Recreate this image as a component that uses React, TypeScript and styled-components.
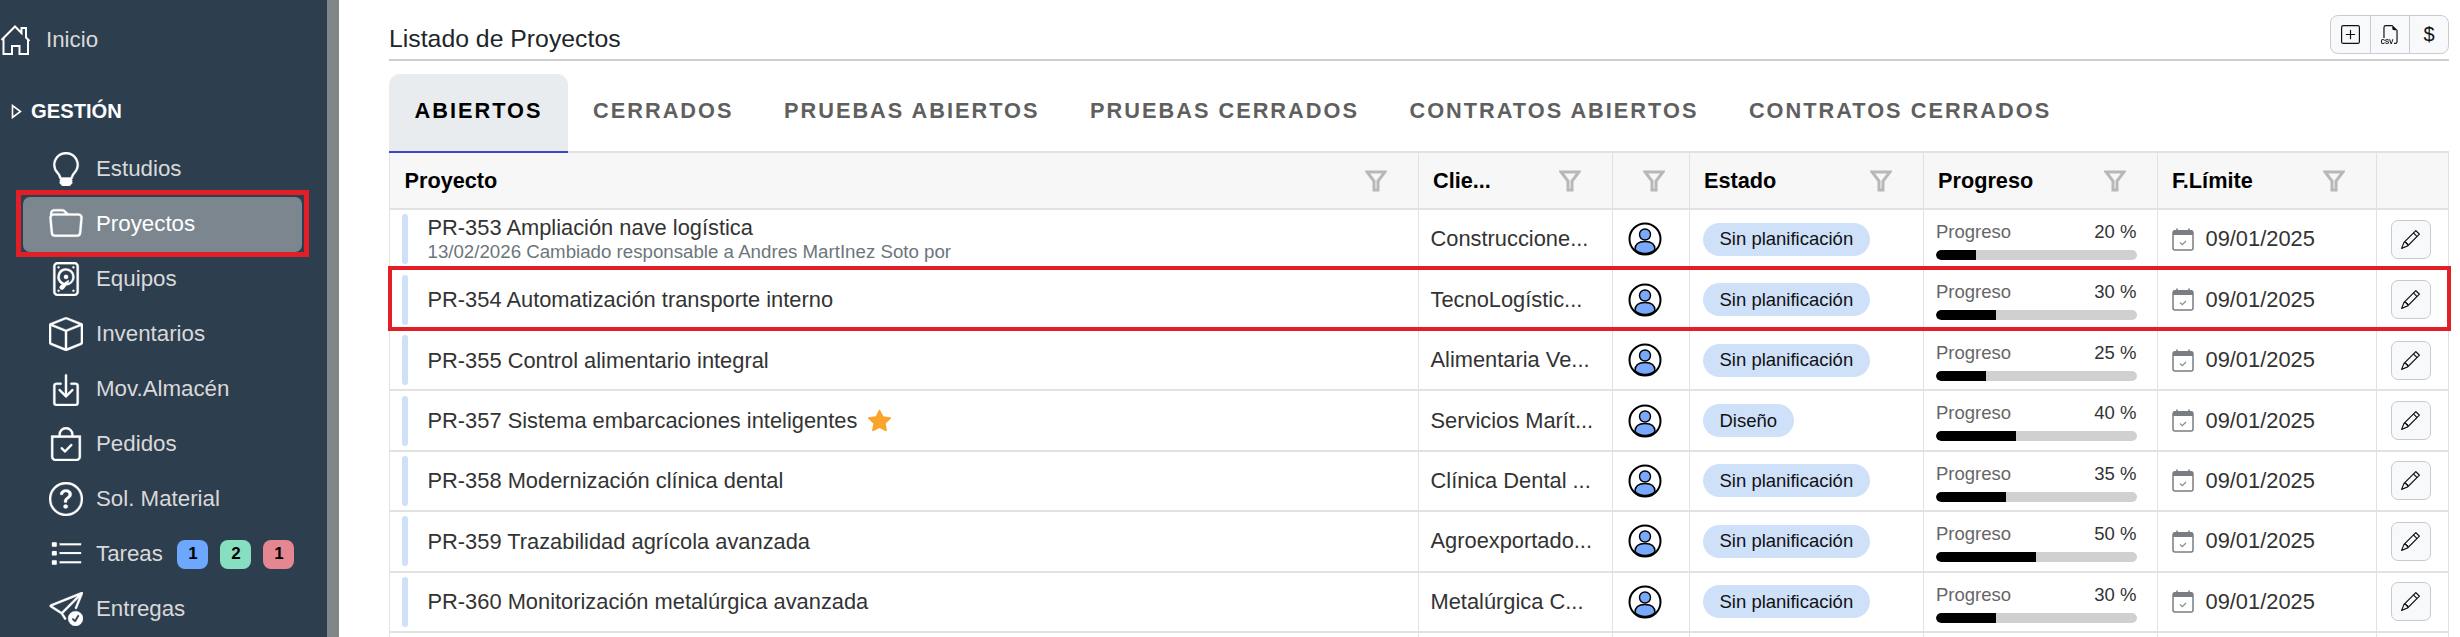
import React from "react";
import styled, { createGlobalStyle } from "styled-components";
import {
  BsLightbulb, BsFolder, BsDeviceHdd, BsBox, BsBoxArrowInDown, BsBagCheck,
  BsQuestionCircle, BsSendCheck, BsPlusSquare, BsFiletypeCsv, BsPencil, BsStarFill,
} from "react-icons/bs";

const Global = createGlobalStyle`
  html, body { margin: 0; padding: 0; height: 100%; overflow: hidden; background: #fff; }
  body { font-family: "Liberation Sans", Arial, sans-serif; }
  * { box-sizing: border-box; }
`;

const Page = styled.div`display: flex; height: 637px; width: 2460px; overflow: hidden;`;
const Sidebar = styled.nav`
  width: 327px; flex: none; background: #2d3e4f; color: #d9d9d9; padding-top: 24px;
`;
const Gutter = styled.div`width: 12px; flex: none; background: #808588;`;
const HomeLink = styled.div`
  display: flex; align-items: center; height: 32px; gap: 15px; font-size: 22.3px;
`;
const Section = styled.div`
  display: flex; align-items: center; height: 24px; margin-top: 43px; padding-left: 11px; gap: 9px;
  color: #fff; font-weight: 700; font-size: 20.2px;
`;
const Menu = styled.div`display: flex; flex-direction: column; margin-top: 18.5px; margin-left: 23px; width: 279px;`;
const MenuItem = styled.div<{ $active?: boolean }>`
  position: relative;
  display: flex; align-items: center; height: 55px; padding-left: 25px; gap: 13px; font-size: 22.3px;
  border-radius: 7px;
  background: ${p => (p.$active ? "#7b868f" : "transparent")};
  color: ${p => (p.$active ? "#fff" : "#d9d9d9")};
  ${p => p.$active && `&::after { content: ""; position: absolute; inset: -6.500px -7px -5.500px -7px; border: 5px solid #e21f26; pointer-events: none; }`}
`;
const MenuIcon = styled.span`
  width: 35px; height: 35px; flex: none; display: flex; align-items: center; justify-content: center; color: #fff;
  svg { width: 34px; height: 34px; stroke: currentColor; stroke-width: .15; }
`;
const Badge = styled.span<{ $bg: string }>`
  width: 31px; height: 29px; border-radius: 8px; background: ${p => p.$bg}; color: #000;
  font-weight: 700; font-size: 17px; display: flex; align-items: center; justify-content: center;
`;
const Badges = styled.span`display: flex; gap: 12px; margin-left: 1.5px;`;

const Main = styled.main`flex: 1; min-width: 0; padding: 14px 11px 0 50px;`;
const TitleBar = styled.header`
  display: flex; align-items: flex-start; justify-content: space-between; height: 47px;
  border-bottom: 2px solid #cfcfcf;
`;
const Title = styled.h1`margin: 10.500px 0 0 0; font-size: 24.8px; line-height: 28px; font-weight: 400; color: #212529;`;
const ToolGroup = styled.div`
  display: flex; height: 39px; margin-top: 1px; border: 1.5px solid #c8ccd2; border-radius: 8px; background: #f8f9fa; overflow: hidden;
`;
const ToolButton = styled.div`
  width: 39px; display: flex; align-items: center; justify-content: center; font-size: 20px; color: #111;
  & + & { border-left: 1.5px solid #c8ccd2; }
  svg { width: 19px; height: 19px; }
`;
const Tabs = styled.div`
  display: flex; margin-top: 13px; height: 79px; border-bottom: 2px solid #e2e2e2;
`;
const Tab = styled.div<{ $active?: boolean }>`
  height: 79px; display: flex; align-items: center; padding: 0 25px 3px 25.500px; font-weight: 700; font-size: 21.75px; letter-spacing: 2px;
  white-space: nowrap;
  color: ${p => (p.$active ? "#000" : "#5f5f5f")};
  background: ${p => (p.$active ? "#e9ecef" : "transparent")};
  border-radius: 11px 11px 0 0;
  border-bottom: 2px solid ${p => (p.$active ? "#4045c8" : "transparent")};
`;
const Table = styled.div`border-left: 1.5px solid #e2e2e2; border-right: 1.5px solid #e2e2e2;`;
const cols = "1027.5px 194px 77px 234px 234px 219px 1fr";
const HeadRow = styled.div`
  display: grid; grid-template-columns: ${cols}; height: 57px; background: #f7f7f7; border-bottom: 2px solid #e2e2e2;
`;
const HeadCell = styled.div<{ $tight?: boolean }>`
  display: flex; align-items: center; justify-content: space-between; padding: 0 ${p => (p.$tight ? 24 : 31)}px 0 14.500px; font-weight: 700; font-size: 21.7px; color: #000;
  white-space: nowrap;
  & + & { border-left: 1.5px solid #e2e2e2; }
`;
const Row = styled.div<{ $marked?: boolean }>`
  display: grid; grid-template-columns: ${cols}; height: 60.45px; border-bottom: 2px solid #e2e2e2; position: relative;
  ${p => p.$marked && `&::after { content: ""; position: absolute; top: -4px; bottom: -2.500px; left: -2px; right: -2.500px; border: 4.5px solid #e21f26; pointer-events: none; }`}
`;
const Cell = styled.div`
  display: flex; align-items: center; min-width: 0; padding: 0 0 0 12px; font-size: 21.85px; color: #333; white-space: nowrap;
  & + & { border-left: 1.5px solid #e2e2e2; }
`;
const ProjectCell = styled(Cell)`padding: 0 0 0 11.500px; gap: 20px;`;
const Mark = styled.span`width: 6px; height: 50px; flex: none; background: #cfe0f9; border-radius: 3px;`;
const ProjectText = styled.div`display: flex; flex-direction: column; justify-content: center;`;
const ProjectName = styled.div`display: flex; align-items: center; gap: 11px; line-height: 25px; white-space: nowrap; svg { color: #f9a42b; width: 23px; height: 23px; }`;
const ProjectNote = styled.div`font-size: 18.7px; line-height: 23px; color: #6c757d; white-space: nowrap;`;
const AvatarCell = styled(Cell)`padding: 0 0 0 15.500px;`;
const StateCell = styled(Cell)`padding: 0 0 0 13px;`;
const Pill = styled.span`
  display: inline-flex; align-items: center; height: 33px; padding: 0 17px; border-radius: 17px; background: #cfe0f9; color: #111; font-size: 18.5px; white-space: nowrap;
`;
const ProgressCell = styled(Cell)`display: block; padding: 11px 20px 0 12.500px;`;
const ProgressLabels = styled.div`display: flex; justify-content: space-between; font-size: 18.5px; line-height: 22px; color: #666;`;
const ProgressValue = styled.span`color: #333;`;
const Track = styled.div`height: 10px; margin-top: 7px; background: #d0d0d0; border-radius: 5px; overflow: hidden;`;
const Fill = styled.div`height: 100%; background: #000; border-radius: 5px 0 0 5px;`;
const DateCell = styled(Cell)`padding: 0 0 0 14px; gap: 12px;`;
const ActionCell = styled(Cell)`padding: 0 0 0 14px;`;
const EditButton = styled.div`
  width: 40px; height: 39px; display: flex; align-items: center; justify-content: center; background: #f8f9fa; border: 1.5px solid #c5cad3; border-radius: 7px; color: #111;
  svg { width: 19px; height: 19px; }
`;

const HomeIcon = () => (
  <svg width="31" height="32" viewBox="0 0 31 32" fill="none" stroke="#fff" strokeWidth="2">
    <path d="M1.500 16 L15 2.500 L21.500 9 V4 H26 V13.500 L29.500 17" />
    <path d="M3.500 14 V30 H12 V22 H19.500 V30 H28 V15" />
  </svg>
);
const TriangleIcon = () => (
  <svg width="11" height="15" viewBox="0 0 11 15" fill="none" stroke="#fff" strokeWidth="1.6"><path d="M1.500 1.500v12l8-6z" /></svg>
);
const TasksIcon = () => (
  <svg viewBox="0 0 35 35" fill="#fff">
    <rect x="3" y="5.500" width="5" height="4.500" rx=".8" /><rect x="3" y="14.500" width="5" height="4.500" rx=".8" /><rect x="3" y="24" width="5" height="4.500" rx=".8" />
    <rect x="11" y="6.500" width="22" height="2" /><rect x="11" y="15.500" width="22" height="2" /><rect x="11" y="25" width="22" height="2" />
  </svg>
);
const FunnelIcon = () => (
  <svg width="22" height="22" viewBox="0 0 22 22" fill="none" stroke="#b8b8b8" strokeWidth="3" style={{ flex: "none" }}>
    <path d="M2 2H20L13 11V20H9V11Z" />
  </svg>
);
const CalendarIcon = () => (
  <svg width="22" height="23" viewBox="0 0 22 23" style={{ flex: "none" }}>
    <rect x="1" y="3" width="20" height="19" rx="2" fill="#fff" stroke="#7a7e83" strokeWidth="1.500" />
    <path d="M1 3.500a1.500 1.500 0 0 1 1.500-1.500h17a1.500 1.500 0 0 1 1.500 1.500V7H1z" fill="#7a7e83" />
    <path d="M5 .5v3M17 .5v3" stroke="#7a7e83" strokeWidth="1.600" />
    <path d="M8 14.500l2.300 2.200 3.700-3.700" fill="none" stroke="#85898e" strokeWidth="1.100" />
  </svg>
);
const Avatar = () => (
  <svg width="34" height="34" viewBox="0 0 34 34" fill="#7aa9fb" stroke="#000" strokeWidth="1.400">
    <circle cx="17" cy="17" r="15.500" fill="#fff" strokeWidth="2" />
    <circle cx="17" cy="12.500" r="5.500" />
    <path d="M7 27.500c0-5.500 4-8 10-8s10 2.500 10 8c-2.500 2.500-6 4-10 4s-7.500-1.500-10-4z" />
  </svg>
);

const rows = [
  { id: "PR-353 Ampliación nave logística", note: "13/02/2026 Cambiado responsable a Andres MartInez Soto por", client: "Construccione...", state: "Sin planificación", pct: 20 },
  { id: "PR-354 Automatización transporte interno", client: "TecnoLogístic...", state: "Sin planificación", pct: 30, marked: true },
  { id: "PR-355 Control alimentario integral", client: "Alimentaria Ve...", state: "Sin planificación", pct: 25 },
  { id: "PR-357 Sistema embarcaciones inteligentes", client: "Servicios Marít...", state: "Diseño", pct: 40, star: true },
  { id: "PR-358 Modernización clínica dental", client: "Clínica Dental ...", state: "Sin planificación", pct: 35 },
  { id: "PR-359 Trazabilidad agrícola avanzada", client: "Agroexportado...", state: "Sin planificación", pct: 50 },
  { id: "PR-360 Monitorización metalúrgica avanzada", client: "Metalúrgica C...", state: "Sin planificación", pct: 30 },
];

const menu = [
  { label: "Estudios", icon: <BsLightbulb /> },
  { label: "Proyectos", icon: <BsFolder />, active: true },
  { label: "Equipos", icon: <BsDeviceHdd /> },
  { label: "Inventarios", icon: <BsBox /> },
  { label: "Mov.Almacén", icon: <BsBoxArrowInDown /> },
  { label: "Pedidos", icon: <BsBagCheck /> },
  { label: "Sol. Material", icon: <BsQuestionCircle /> },
  { label: "Tareas", icon: <TasksIcon />, badges: true },
  { label: "Entregas", icon: <BsSendCheck /> },
];

const tabs = ["ABIERTOS", "CERRADOS", "PRUEBAS ABIERTOS", "PRUEBAS CERRADOS", "CONTRATOS ABIERTOS", "CONTRATOS CERRADOS"];

export default function App() {
  return (
    <Page>
      <Global />
      <Sidebar>
        <HomeLink><HomeIcon />Inicio</HomeLink>
        <Section><TriangleIcon />GESTIÓN</Section>
        <Menu>
          {menu.map(m => (
            <MenuItem key={m.label} $active={m.active}>
              <MenuIcon>{m.icon}</MenuIcon>
              {m.label}
              {m.badges && (
                <Badges>
                  <Badge $bg="#6ea8fe">1</Badge>
                  <Badge $bg="#86dfc0">2</Badge>
                  <Badge $bg="#e48791">1</Badge>
                </Badges>
              )}
            </MenuItem>
          ))}
        </Menu>
      </Sidebar>
      <Gutter />
      <Main>
        <TitleBar>
          <Title>Listado de Proyectos</Title>
          <ToolGroup>
            <ToolButton><BsPlusSquare /></ToolButton>
            <ToolButton><BsFiletypeCsv /></ToolButton>
            <ToolButton>$</ToolButton>
          </ToolGroup>
        </TitleBar>
        <Tabs>
          {tabs.map((t, i) => <Tab key={t} $active={i === 0}>{t}</Tab>)}
        </Tabs>
        <Table>
          <HeadRow>
            <HeadCell>Proyecto<FunnelIcon /></HeadCell>
            <HeadCell>Clie...<FunnelIcon /></HeadCell>
            <HeadCell $tight><span /><FunnelIcon /></HeadCell>
            <HeadCell>Estado<FunnelIcon /></HeadCell>
            <HeadCell>Progreso<FunnelIcon /></HeadCell>
            <HeadCell>F.Límite<FunnelIcon /></HeadCell>
            <HeadCell />
          </HeadRow>
          {rows.map(r => (
            <Row key={r.id} $marked={r.marked}>
              <ProjectCell>
                <Mark />
                <ProjectText>
                  <ProjectName>{r.id}{r.star && <BsStarFill />}</ProjectName>
                  {r.note && <ProjectNote>{r.note}</ProjectNote>}
                </ProjectText>
              </ProjectCell>
              <Cell>{r.client}</Cell>
              <AvatarCell><Avatar /></AvatarCell>
              <StateCell><Pill>{r.state}</Pill></StateCell>
              <ProgressCell>
                <ProgressLabels>Progreso<ProgressValue>{r.pct} %</ProgressValue></ProgressLabels>
                <Track><Fill style={{ width: `${r.pct}%` }} /></Track>
              </ProgressCell>
              <DateCell><CalendarIcon />09/01/2025</DateCell>
              <ActionCell><EditButton><BsPencil /></EditButton></ActionCell>
            </Row>
          ))}
          <Row>
            <ProjectCell><Mark /></ProjectCell>
            <Cell /><Cell /><Cell /><Cell /><Cell /><Cell />
          </Row>
        </Table>
      </Main>
    </Page>
  );
}
